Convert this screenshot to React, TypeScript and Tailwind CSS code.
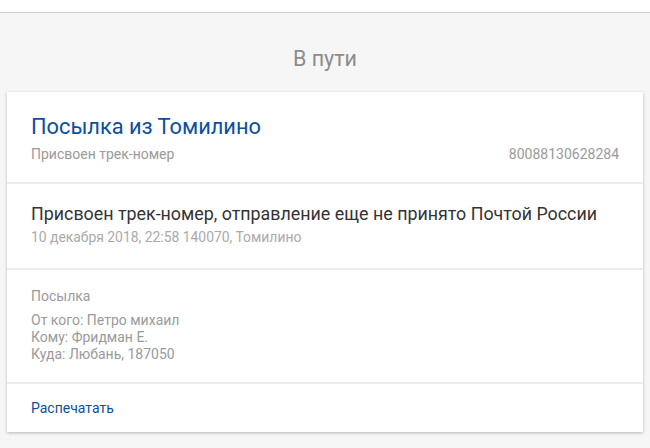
export default function App() {
  return (
    <div
      className="min-h-[448px] bg-[#f6f6f6]"
      style={{ fontFamily: 'Roboto, "Noto Sans", sans-serif' }}
    >
      <div className="h-[13px] border-b border-[#cfcfcf] bg-white" />
      <h2 className="pt-[33px] pb-[20px] text-center text-[21.5px] leading-[26px] text-[#8c8c8c]">
        В пути
      </h2>
      <div className="mx-[7px] bg-white shadow-[0_1px_3px_rgba(0,0,0,0.25)]">
        <div className="border-b-2 border-[#ececec] px-[24px] pt-[21px] pb-[19px]">
          <div className="text-[21.8px] leading-[28px] text-[#0b4f9e]">Посылка из Томилино</div>
          <div className="mt-[4px] flex justify-between text-[14px] leading-[18px] text-[#9a9a9a]">
            <span>Присвоен трек-номер</span>
            <span>80088130628284</span>
          </div>
        </div>
        <div className="border-b-2 border-[#ececec] px-[24px] pt-[18px] pb-[22px]">
          <div className="text-[17.85px] leading-[24px] text-[#333]">
            Присвоен трек-номер, отправление еще не принято Почтой России
          </div>
          <div className="mt-[2px] text-[13.9px] leading-[18px] text-[#aaa]">
            10 декабря 2018, 22:58 140070, Томилино
          </div>
        </div>
        <div className="border-b-2 border-[#ececec] px-[24px] pt-[17px] pb-[19px] text-[14px] text-[#9a9a9a]">
          <div className="leading-[18px]">Посылка</div>
          <div className="mt-[7px] leading-[17px]">
            <div>От кого: Петро михаил</div>
            <div>Кому: Фридман Е.</div>
            <div>Куда: Любань, 187050</div>
          </div>
        </div>
        <div className="px-[24px] pt-[15px] pb-[15px] text-[14px] leading-[18px]">
          <a href="#" className="text-[#0b4f9e]">Распечатать</a>
        </div>
      </div>
    </div>
  );
}
